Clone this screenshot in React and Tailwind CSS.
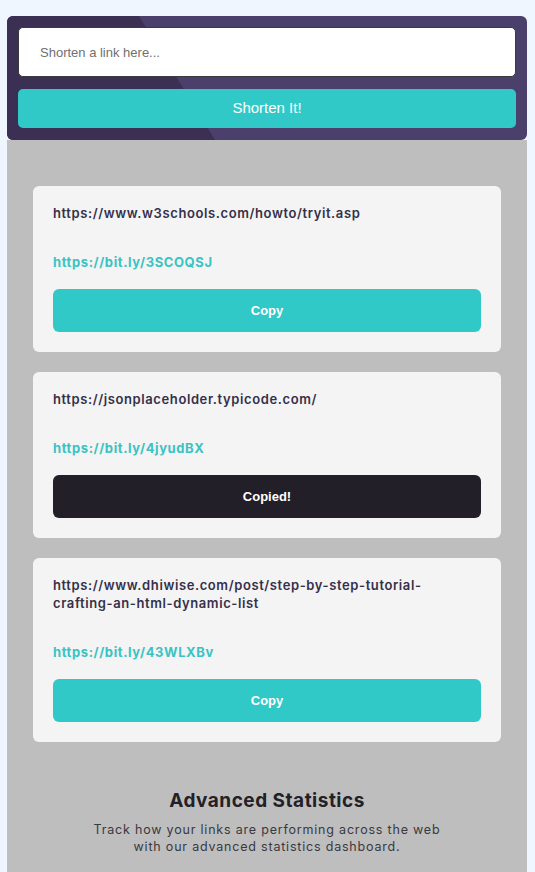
const links = [
  {
    long: 'https://www.w3schools.com/howto/tryit.asp',
    short: 'https://bit.ly/3SCOQSJ',
    copied: false,
  },
  {
    long: 'https://jsonplaceholder.typicode.com/',
    short: 'https://bit.ly/4jyudBX',
    copied: true,
  },
  {
    long: 'https://www.dhiwise.com/post/step-by-step-tutorial-crafting-an-html-dynamic-list',
    short: 'https://bit.ly/43WLXBv',
    copied: false,
  },
];

const poppins = { fontFamily: 'Inter, "Noto Sans", sans-serif' };

function LinkCard({ item }) {
  return (
    <div className="bg-[#f4f4f4] rounded-md px-5 pt-[18px] pb-5">
      <p className="text-[13px] leading-[18px] font-semibold tracking-[0.6px] text-[#34304a] break-words">
        {item.long}
      </p>
      <p className="mt-[31px] text-[13px] leading-[18px] font-bold tracking-[0.6px] text-[#3bc3c3]">
        {item.short}
      </p>
      <button
        className={`mt-[18px] w-full h-[43px] rounded-md text-white text-[13px] font-bold font-['Liberation_Sans',Arial,sans-serif] ${
          item.copied ? 'bg-[#221f28]' : 'bg-[#31c8c8]'
        }`}
      >
        {item.copied ? 'Copied!' : 'Copy'}
      </button>
    </div>
  );
}

export default function App() {
  return (
    <div className="min-h-[872px] bg-[#eff6ff] pt-4 pl-[7px]" style={poppins}>
      <div className="w-[520px]">
        <div className="relative overflow-hidden rounded-md bg-[#4b3f6b] px-[11px] pt-[11px] pb-3">
          <svg className="absolute inset-0" width="520" height="124" viewBox="0 0 520 124">
            <polygon points="0,0 132,0 208,124 0,124" fill="#3b3054" />
          </svg>
          <div className="relative flex flex-col gap-3 font-['Liberation_Sans',Arial,sans-serif]">
            <input
              placeholder="Shorten a link here..."
              className="h-[50px] w-full rounded-[5px] border border-[#3a3a3a] bg-white px-[21px] text-[13px] text-black placeholder:text-[#6f6f6f] outline-none"
            />
            <button className="h-[39px] w-full rounded-[5px] bg-[#31c8c8] text-[15px] text-white">
              Shorten It!
            </button>
          </div>
        </div>
        <div className="bg-[#bebebe] px-[26px] pt-[46px] pb-6">
          <div className="flex flex-col gap-5">
            {links.map((l, i) => (
              <LinkCard key={i} item={l} />
            ))}
          </div>
          <div className="mt-[47px] text-center">
            <h2 className="text-[19px] leading-6 font-bold tracking-[0.5px] text-[#232127]">
              Advanced Statistics
            </h2>
            <p className="mt-[8px] mx-auto w-[360px] text-[12.5px] leading-[17px] tracking-[0.8px] text-[#3a3940]">
              Track how your links are performing across the web with our advanced statistics dashboard.
            </p>
          </div>
        </div>
      </div>
    </div>
  );
}
